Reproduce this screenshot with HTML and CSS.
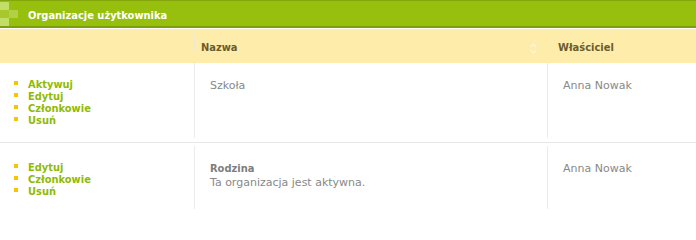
FILE: index.html
```html
<!DOCTYPE html>
<html lang="pl">
<head>
<meta charset="utf-8">
<title>Organizacje użytkownika</title>
<link rel="stylesheet" href="styles.css">
</head>
<body>
<div class="panel">
  <div class="panel-title">
    <svg class="checker" width="18" height="25" viewBox="0 0 18 25">
      <rect x="0" y="1" width="9" height="8" fill="#c3dd69"/>
      <rect x="0" y="9" width="9" height="8" fill="#a6c82a"/>
      <rect x="9" y="9" width="9" height="8" fill="#b2d045"/>
      <rect x="0" y="17" width="9" height="8" fill="#c3dd69"/>
    </svg>
    <span class="title-text">Organizacje użytkownika</span>
  </div>
  <div class="table-head">
    <div class="hcell"></div>
    <div class="hcell hcell-name">
      <span>Nazwa</span>
      <svg class="sort" width="7" height="11" viewBox="0 0 7 11">
        <polyline points="0.6,4.2 3.5,1.2 6.4,4.2" fill="none" stroke="#fff7dc" stroke-width="1.2"/>
        <polyline points="0.6,6.8 3.5,9.8 6.4,6.8" fill="none" stroke="#fff7dc" stroke-width="1.2"/>
      </svg>
    </div>
    <div class="hcell hcell-owner">Właściciel</div>
  </div>
  <div class="row">
    <div class="cell cell-actions">
      <ul class="actions">
        <li><a href="#">Aktywuj</a></li>
        <li><a href="#">Edytuj</a></li>
        <li><a href="#">Członkowie</a></li>
        <li><a href="#">Usuń</a></li>
      </ul>
    </div>
    <div class="cell cell-text">Szkoła</div>
    <div class="cell cell-text">Anna Nowak</div>
  </div>
  <div class="row row-next">
    <div class="cell cell-actions">
      <ul class="actions">
        <li><a href="#">Edytuj</a></li>
        <li><a href="#">Członkowie</a></li>
        <li><a href="#">Usuń</a></li>
      </ul>
    </div>
    <div class="cell cell-text"><strong class="org-name">Rodzina</strong><br>Ta organizacja jest aktywna.</div>
    <div class="cell cell-text">Anna Nowak</div>
  </div>
</div>
</body>
</html>
```
FILE: styles.css
```css
html, body {
  margin: 0;
  padding: 0;
  background: #ffffff;
}
body {
  font-family: "DejaVu Sans", Verdana, sans-serif;
  font-size: 11px;
  width: 696px;
  overflow: hidden;
}
.title-text,
.hcell,
.org-name,
.actions a {
  font-family: "DejaVu Sans Condensed", "DejaVu Sans", sans-serif;
  font-weight: bold;
}
.panel-title {
  display: flex;
  align-items: flex-start;
  height: 25px;
  background: #97bf0d;
  border-top: 1px solid #83a60b;
  border-bottom: 2px solid #7c9e09;
  margin-bottom: 1px;
}
.checker {
  display: block;
  flex: none;
}
.title-text {
  margin-left: 10px;
  padding-top: 8px;
  line-height: 13px;
  color: #ffffff;
}
.table-head {
  display: grid;
  grid-template-columns: 194px 353px 1fr;
  height: 29px;
  padding-top: 5px;
  background: #feecab;
}
.hcell {
  height: 18px;
  box-sizing: border-box;
  padding-top: 7px;
  line-height: 13px;
  color: #6b5c2c;
}
.hcell-name {
  display: flex;
  justify-content: space-between;
  align-items: flex-start;
  border-left: 1px solid #efe9d2;
  padding-left: 6px;
  padding-right: 10px;
}
.sort {
  display: block;
  margin-top: 2px;
}
.hcell-owner {
  padding-left: 11px;
}
.row {
  display: grid;
  grid-template-columns: 194px 353px 1fr;
  padding-bottom: 4px;
  border-bottom: 1px solid #e7e7e7;
}
.row-next {
  padding-top: 3px;
  border-bottom: none;
}
.cell {
  padding: 16px 0 11px 0;
}
.cell-text {
  border-left: 1px solid #ebebeb;
  padding-left: 15px;
  padding-right: 15px;
  line-height: 14px;
  color: #888888;
}
.org-name {
  color: #7d7d7d;
}
.actions {
  list-style: none;
  margin: 0;
  padding: 0 0 0 14px;
}
.actions li {
  display: flex;
  align-items: flex-start;
  line-height: 12px;
}
.actions li::before {
  content: "";
  flex: none;
  width: 4px;
  height: 4px;
  margin-top: 2px;
  margin-right: 10px;
  background: #f7c600;
}
.actions a {
  color: #90bb05;
  text-decoration: none;
}
```
